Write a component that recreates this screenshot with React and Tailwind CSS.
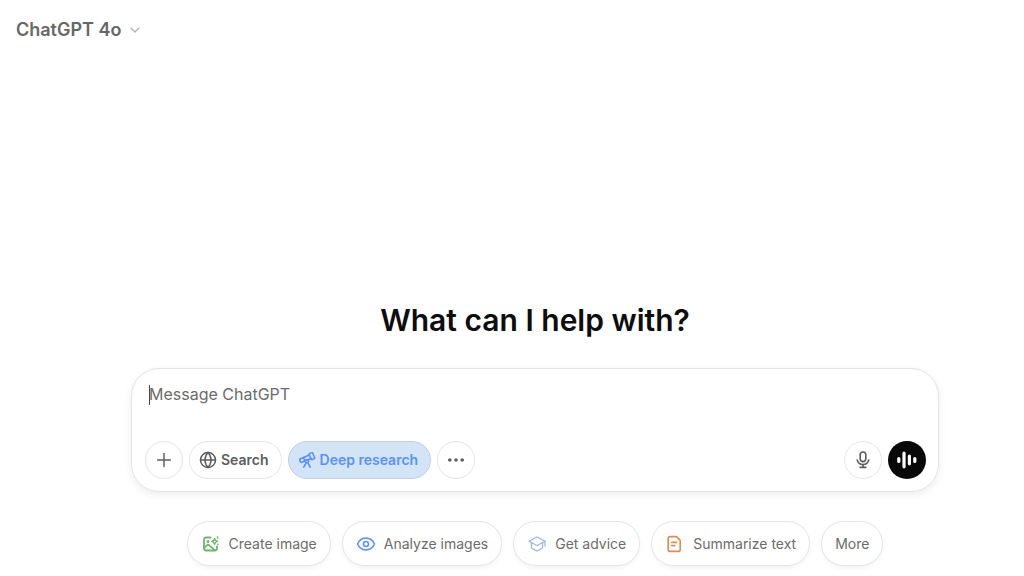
import React, { useState } from 'react';
import { ChevronDown, Plus, Globe, Eye } from 'lucide-react';

function TelescopeIcon() {
  return (
    <svg
      className="size-[18px] shrink-0"
      viewBox="0 0 18 18"
      fill="none"
      stroke="currentColor"
      strokeWidth="1.6"
      strokeLinecap="round"
      strokeLinejoin="round"
      aria-hidden="true"
    >
      <path d="M11.6 2.5l1.9-.9a.8.8 0 0 1 1.1.4l2 4.7a.8.8 0 0 1-.4 1.1l-1.9.8a.8.8 0 0 1-1.1-.4l-2-4.6a.8.8 0 0 1 .4-1.1z" />
      <path d="M11.3 3.9L2.1 7.900a.8.8 0 0 0-.4 1.100l.8 1.900a.8.8 0 0 0 1.100.4l3.800-1.500M10.600 8.600l2.600-1" />
      <path d="M5.400 6.600l1.200 2.800" />
      <circle cx="9" cy="10.2" r="1.6" />
      <path d="M8.200 11.700l-2.400 4.500M9.800 11.700l2.400 4.500" />
    </svg>
  );
}

function MicIcon() {
  return (
    <svg
      className="size-5"
      viewBox="0 0 20 20"
      fill="none"
      stroke="currentColor"
      strokeWidth="1.6"
      strokeLinecap="round"
      aria-hidden="true"
    >
      <rect x="7.2" y="2" width="5.6" height="9.6" rx="2.8" />
      <path d="M4.2 10a6 6 0 0 0 11.6 0" />
      <path d="M10 14.6v2.8M7.2 17.4h5.6" />
    </svg>
  );
}

function VoiceIcon() {
  return (
    <svg className="size-[22px]" viewBox="0 0 22 22" fill="currentColor" aria-hidden="true">
      <rect x="1.2" y="8" width="3.2" height="6" rx="1.6" />
      <rect x="6.4" y="2.6" width="3.2" height="16.8" rx="1.6" />
      <rect x="11.8" y="5.6" width="3.2" height="10.8" rx="1.6" />
      <rect x="17.2" y="8" width="3.2" height="6" rx="1.6" />
    </svg>
  );
}

function DotsIcon() {
  return (
    <svg className="size-5" viewBox="0 0 20 20" fill="currentColor" aria-hidden="true">
      <circle cx="3.8" cy="10" r="1.8" />
      <circle cx="10" cy="10" r="1.8" />
      <circle cx="16.2" cy="10" r="1.8" />
    </svg>
  );
}

function ImageSparkIcon() {
  return (
    <svg
      className="size-5 shrink-0 text-[#6db56c]"
      viewBox="0 0 20 20"
      fill="none"
      stroke="currentColor"
      strokeWidth="1.8"
      strokeLinecap="round"
      strokeLinejoin="round"
      aria-hidden="true"
    >
      <path d="M9.600 3.500H5.200a2.200 2.200 0 0 0-2.200 2.200v8.600a2.200 2.200 0 0 0 2.200 2.200h8.600a2.200 2.200 0 0 0 2.200-2.200v-2" />
      <path d="M3.400 13.600l2.800-2.500a1.400 1.400 0 0 1 1.800 0l5.600 5" />
      <circle cx="7" cy="7.4" r="0.6" fill="currentColor" />
      <path
        d="M10.600 7.400c1.900-.2 2.700-1.100 3-3 .3 1.900 1.100 2.800 3 3-1.900.3-2.700 1.100-3 3-.3-1.900-1.100-2.700-3-3z"
        strokeWidth="1.3"
      />
      <path d="M16.600 3v1M16.800 10.200v.4" strokeWidth="1.6" />
    </svg>
  );
}

function CapIcon() {
  return (
    <svg
      className="size-5 shrink-0 text-[#93b6e6]"
      viewBox="0 0 20 20"
      fill="none"
      stroke="currentColor"
      strokeWidth="1.2"
      strokeLinecap="round"
      strokeLinejoin="round"
      aria-hidden="true"
    >
      <path d="M9.400 3.200L2 7.200l7.400 4a1.400 1.400 0 0 0 1.200 0L18 7.200l-7.400-4a1.400 1.400 0 0 0-1.200 0z" />
      <path d="M4.400 8.800v4.600c0 .4.200.7.500.9l4.500 2.500c.4.200.8.200 1.200 0l4.500-2.500c.3-.2.500-.5.500-.9V8.800" />
      <path d="M18 7.200v5" />
    </svg>
  );
}

function DocIcon() {
  return (
    <svg
      className="size-5 shrink-0 text-[#e08a4f]"
      viewBox="0 0 20 20"
      fill="none"
      stroke="currentColor"
      strokeWidth="1.6"
      strokeLinecap="round"
      strokeLinejoin="round"
      aria-hidden="true"
    >
      <path d="M11.400 2.600H5.200a2 2 0 0 0-2 2v10.800a2 2 0 0 0 2 2h8a2 2 0 0 0 2-2V6.400z" />
      <path d="M6.600 8.400h5M6.600 11.600h3.200" />
    </svg>
  );
}

const suggestions = [
  { label: 'Create image', icon: <ImageSparkIcon /> },
  { label: 'Analyze images', icon: <Eye className="size-5 shrink-0 text-[#5f93f5]" aria-hidden="true" /> },
  { label: 'Get advice', icon: <CapIcon /> },
  { label: 'Summarize text', icon: <DocIcon /> },
  { label: 'More' },
];

function RoundButton({ label, children }) {
  return (
    <button
      type="button"
      aria-label={label}
      className="flex size-[38px] shrink-0 items-center justify-center rounded-full border border-[#e5e6e6] text-[#5d5d5d]"
    >
      {children}
    </button>
  );
}

function Suggestion({ label, icon }) {
  return (
    <button
      type="button"
      className="flex h-[45px] items-center gap-2 rounded-full border border-[#e5e6e6] bg-white px-[13px] text-sm whitespace-nowrap text-[#6b6c6c] shadow-[0_2px_4px_rgba(0,0,0,0.05)]"
    >
      {icon}
      {label}
    </button>
  );
}

function Composer() {
  const [message, setMessage] = useState('');
  const [deepResearch, setDeepResearch] = useState(true);

  return (
    <form
      className="w-full max-w-[808px] rounded-[28px] border border-[#e3e4e4] bg-white py-3 pr-3 pl-[13px] shadow-[0_3px_8px_rgba(0,0,0,0.07)]"
      onSubmit={(e) => e.preventDefault()}
    >
      <div className="relative">
        <textarea
          aria-label="Message ChatGPT"
          rows={1}
          className="block h-[60px] w-full resize-none bg-transparent px-1 py-px text-base leading-6 text-[#0d0d0d] outline-none placeholder:text-[#6b6c6c]"
          placeholder="Message ChatGPT"
          value={message}
          onChange={(e) => setMessage(e.target.value)}
        />
        {message === '' && <span className="absolute top-1 left-1 h-5 w-px bg-[#444444]" />}
      </div>

      <div className="flex items-center gap-1.5">
        <RoundButton label="Add">
          <Plus className="size-[22px]" strokeWidth={1.6} />
        </RoundButton>
        <button
          type="button"
          className="flex h-[38px] items-center gap-1 rounded-full border border-[#e5e6e6] px-[9px] pr-3 text-sm font-semibold text-[#5d5d5d]"
        >
          <Globe className="size-[18px]" aria-hidden="true" />
          Search
        </button>
        <button
          type="button"
          aria-pressed={deepResearch}
          onClick={() => setDeepResearch(!deepResearch)}
          className="flex h-[38px] items-center gap-1 rounded-full border border-[#bfd0e2] bg-[#d3e4f7] px-[9px] pr-3 text-sm font-semibold whitespace-nowrap text-[#5a92f6]"
        >
          <TelescopeIcon />
          Deep research
        </button>
        <RoundButton label="More tools">
          <DotsIcon />
        </RoundButton>

        <div className="ml-auto flex gap-1.5">
          <RoundButton label="Dictate">
            <MicIcon />
          </RoundButton>
          <button
            type="button"
            aria-label="Use voice mode"
            className="flex size-[38px] items-center justify-center rounded-full bg-[#080808] text-white"
          >
            <VoiceIcon />
          </button>
        </div>
      </div>
    </form>
  );
}

function App() {
  return (
    <div className="flex min-h-screen flex-col bg-white font-['Inter',sans-serif]">
      <header className="px-4 pt-4">
        <button type="button" className="flex items-center gap-1.5 text-lg font-semibold text-[#676767]">
          ChatGPT 4o
          <ChevronDown className="size-4 text-[#b4b4b4]" aria-hidden="true" />
        </button>
      </header>

      <main className="flex flex-1 flex-col items-center justify-end pr-4 pb-[10px] pl-[62px]">
        <h1 className="text-3xl leading-9 font-semibold text-[#0d0d0d]">What can I help with?</h1>
        <div className="mt-[30px] flex w-full justify-center">
          <Composer />
        </div>
        <div className="mt-[29px] flex flex-wrap justify-center gap-[11px]">
          {suggestions.map((item) => (
            <Suggestion key={item.label} label={item.label} icon={item.icon} />
          ))}
        </div>
      </main>
    </div>
  );
}

export default App;
